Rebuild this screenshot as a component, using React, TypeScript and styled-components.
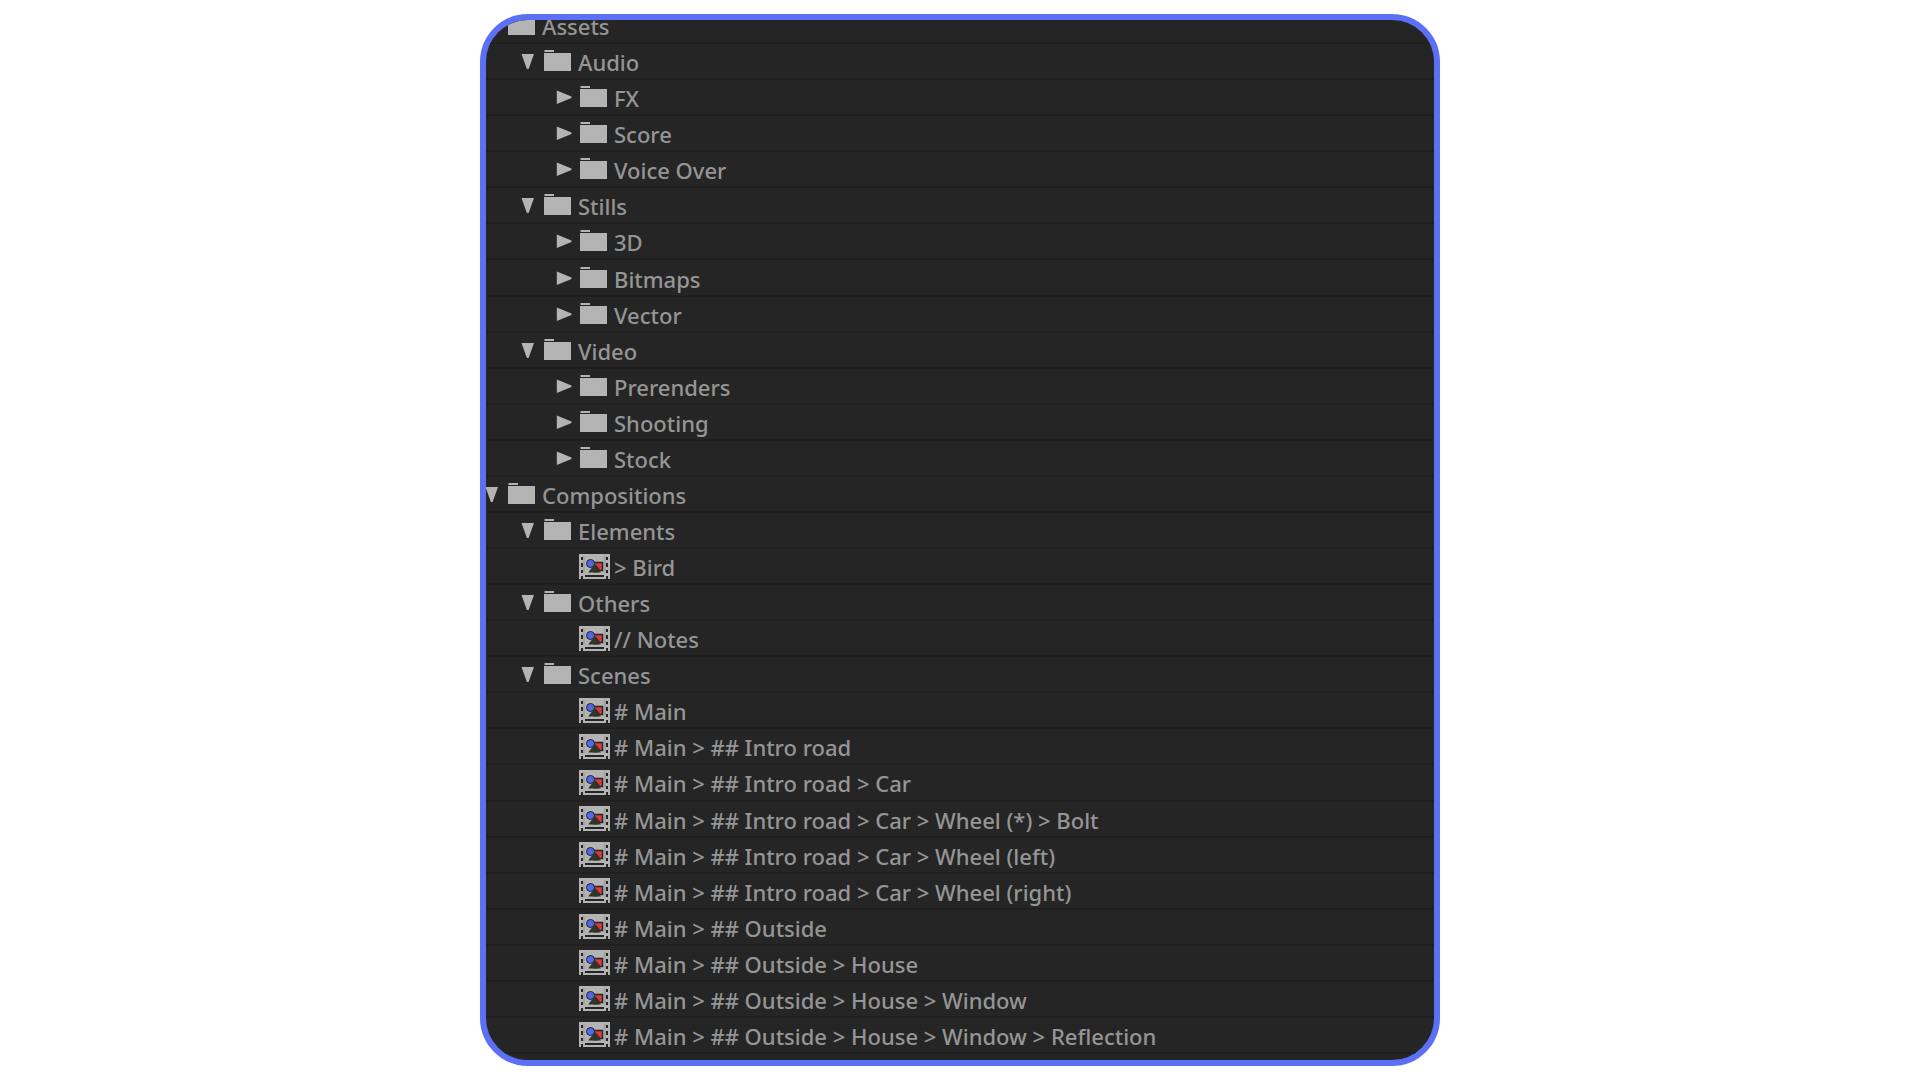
import React, { useState } from "react";
import styled, { createGlobalStyle } from "styled-components";

const GlobalStyle = createGlobalStyle`
  * { box-sizing: border-box; }
  body { margin: 0; background: #ffffff; }
`;

const Page = styled.main`
  display: flex;
  justify-content: center;
  min-height: 100vh;
  padding: 14px 0;
`;

const Panel = styled.section`
  display: flex;
  flex-direction: column;
  width: 50%;
  overflow: hidden;
  border: 6px solid #5b70f5;
  border-radius: 48px;
  background: #252525;
`;

const Tree = styled.ul<{ $rows: number }>`
  flex: 1;
  display: grid;
  grid-template-rows: repeat(${(p) => p.$rows}, 1fr);
  margin: -12px 0 6px;
  padding: 0;
  list-style: none;
`;

const Row = styled.li<{ $depth: number }>`
  display: flex;
  align-items: center;
  padding-left: ${(p) => p.$depth * 36}px;
  border-bottom: 2px solid #1f1f1f;
  color: #959595;
  font-family: "Noto Sans", "Open Sans", sans-serif;
  font-size: 22px;
  font-weight: 500;
  line-height: 32px;
  white-space: nowrap;
`;

const Toggle = styled.button`
  display: flex;
  flex: none;
  align-items: center;
  justify-content: center;
  width: 12px;
  height: 24px;
  padding: 0;
  border: 0;
  background: none;
  color: #b4b4b4;
  cursor: pointer;

  svg { flex: none; }
`;

const ToggleSpace = styled.span`
  flex: none;
  width: 12px;
`;

const IconSlot = styled.span`
  display: flex;
  flex: none;
  justify-content: center;
  width: 28px;
  margin: 0 6px 0 10px;

  svg { flex: none; }
`;

const Label = styled.span`
  padding-top: 2px;
`;

const Triangle = ({ open }: { open: boolean }) => (
  <svg width="16" height="16" viewBox="0 0 16 16" fill="currentColor" aria-hidden="true">
    {open ? <path d="M1.5 1h12.5L8.6 16h-1.700z" /> : <path d="M.8 1.500v13.500L15.500 9V7.500z" />}
  </svg>
);

const FolderIcon = () => (
  <svg width="28" height="22" viewBox="0 0 28 22" aria-hidden="true">
    <path d="M.5 0h9.500v2H.5z" fill="#b4b4b4" />
    <path d="M0 3h27v18H0z" fill="#b4b4b4" />
  </svg>
);

const CompIcon = () => (
  <svg width="31" height="25" viewBox="0 0 31 25" aria-hidden="true">
    <path d="M0 0h31v25H0z" fill="#b4b4b4" />
    <path
      d="M2 3h2v3H2zM2 9h2v4H2zM2 16h2v3H2zM2 22h2v3H2zM27 3h2v3h-2zM27 9h2v4h-2zM27 16h2v3h-2zM27 22h2v3h-2z"
      fill="#252525"
    />
    <path d="M6 21h19v2H6z" fill="#252525" />
    <path d="M5 2v17M26 2v17" stroke="#8f8f8f" strokeWidth="1" />
    <path d="M15 8.500h8.500v8H15z" fill="#e03a3a" stroke="#252525" strokeWidth="1.500" />
    <circle cx="11.500" cy="9.500" r="4" fill="#4f6bea" stroke="#252525" strokeWidth="1" />
    <path d="M15.500 10.500L22 18.500H9z" fill="#34352a" />
    <path d="M15 10.500h2l4 5-2 3h-5z" fill="#34352a" />
  </svg>
);

type Item = { depth: number; name: string; kind: "open" | "closed" | "comp" };

const open = (depth: number, name: string): Item => ({ depth, name, kind: "open" });
const closed = (depth: number, name: string): Item => ({ depth, name, kind: "closed" });
const comp = (name: string): Item => ({ depth: 2, name, kind: "comp" });

const items: Item[] = [
  open(0, "Assets"),
  open(1, "Audio"),
  closed(2, "FX"),
  closed(2, "Score"),
  closed(2, "Voice Over"),
  open(1, "Stills"),
  closed(2, "3D"),
  closed(2, "Bitmaps"),
  closed(2, "Vector"),
  open(1, "Video"),
  closed(2, "Prerenders"),
  closed(2, "Shooting"),
  closed(2, "Stock"),
  open(0, "Compositions"),
  open(1, "Elements"),
  comp("> Bird"),
  open(1, "Others"),
  comp("// Notes"),
  open(1, "Scenes"),
  comp("# Main"),
  comp("# Main > ## Intro road"),
  comp("# Main > ## Intro road > Car"),
  comp("# Main > ## Intro road > Car > Wheel (*) > Bolt"),
  comp("# Main > ## Intro road > Car > Wheel (left)"),
  comp("# Main > ## Intro road > Car > Wheel (right)"),
  comp("# Main > ## Outside"),
  comp("# Main > ## Outside > House"),
  comp("# Main > ## Outside > House > Window"),
  comp("# Main > ## Outside > House > Window > Reflection"),
];

export default function App() {
  const [expanded, setExpanded] = useState(() => items.map((item) => item.kind === "open"));

  const toggle = (index: number) =>
    setExpanded((state) => state.map((value, i) => (i === index ? !value : value)));

  let hiddenBelow = Infinity;

  return (
    <>
      <GlobalStyle />
      <Page>
        <Panel>
          <Tree $rows={items.length}>
            {items.map((item, index) => {
              if (item.depth > hiddenBelow) return null;
              const isFolder = item.kind !== "comp";
              hiddenBelow = isFolder && !expanded[index] ? item.depth : Infinity;
              return (
                <Row key={item.name} $depth={item.depth}>
                  {isFolder ? (
                    <Toggle
                      type="button"
                      aria-expanded={expanded[index]}
                      aria-labelledby={`item-${index}`}
                      onClick={() => toggle(index)}
                    >
                      <Triangle open={expanded[index]} />
                    </Toggle>
                  ) : (
                    <ToggleSpace />
                  )}
                  <IconSlot>{isFolder ? <FolderIcon /> : <CompIcon />}</IconSlot>
                  <Label id={`item-${index}`}>{item.name}</Label>
                </Row>
              );
            })}
          </Tree>
        </Panel>
      </Page>
    </>
  );
}
